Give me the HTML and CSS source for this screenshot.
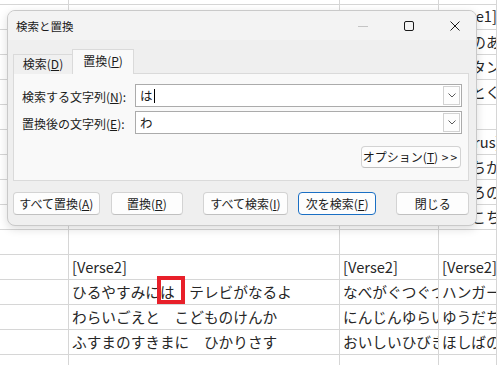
FILE: index.html
```html
<!DOCTYPE html>
<html lang="ja">
<head>
<meta charset="utf-8">
<title>検索と置換</title>
<link rel="stylesheet" href="styles.css">
</head>
<body>
<div class="sheet">
  <div class="c top"></div><div class="c top"></div><div class="c top"></div><div class="c top"></div>
  <div class="c"></div><div class="c r1">[Verse1]</div><div class="c r1">[Verse1]</div><div class="c r1">[Verse1]</div>
  <div class="c"></div><div class="c"></div><div class="c"></div><div class="c">まどのあかり</div>
  <div class="c"></div><div class="c"></div><div class="c"></div><div class="c">ランタンの</div>
  <div class="c"></div><div class="c"></div><div class="c"></div><div class="c">ほっとくつろぐ</div>
  <div class="c"></div><div class="c"></div><div class="c"></div><div class="c"></div>
  <div class="c"></div><div class="c"></div><div class="c"></div><div class="c">[Chorus]</div>
  <div class="c"></div><div class="c"></div><div class="c"></div><div class="c">ちかちか</div>
  <div class="c"></div><div class="c"></div><div class="c"></div><div class="c">こころのうた</div>
  <div class="c"></div><div class="c"></div><div class="c"></div><div class="c">あちこち</div>
  <div class="c"></div><div class="c"></div><div class="c"></div><div class="c"></div>
  <div class="c"></div><div class="c">[Verse2]</div><div class="c">[Verse2]</div><div class="c">[Verse2]</div>
  <div class="c"></div><div class="c">ひるやすみには　テレビがなるよ</div><div class="c">なべがぐつぐつ</div><div class="c">ハンガーに</div>
  <div class="c"></div><div class="c">わらいごえと　こどものけんか</div><div class="c">にんじんゆらいで</div><div class="c">ゆうだちの</div>
  <div class="c"></div><div class="c">ふすまのすきまに　ひかりさす</div><div class="c">おいしいひびき</div><div class="c">ほしばのうた</div>
  <div class="c"></div><div class="c"></div><div class="c"></div><div class="c"></div>
</div>

<div class="highlight"></div>

<div class="dialog">
  <div class="titlebar">
    <span class="title">検索と置換</span>
    <div class="winbtns">
      <span class="wb"><svg width="10" height="10" viewBox="0 0 10 10"><line x1="0" y1="5.5" x2="10" y2="5.5" stroke="#c4c4c4" stroke-width="1"/></svg></span>
      <span class="wb"><svg width="10" height="10" viewBox="0 0 10 10"><rect x="0.5" y="0.5" width="9" height="9" rx="1.5" fill="none" stroke="#1a1a1a" stroke-width="1"/></svg></span>
      <span class="wb"><svg width="10" height="10" viewBox="0 0 10 10"><path d="M0.5 0.5 L9.5 9.5 M9.5 0.5 L0.5 9.5" stroke="#1a1a1a" stroke-width="1" fill="none"/></svg></span>
    </div>
  </div>
  <div class="dbody">
    <div class="tabs">
      <div class="tab">検索(<u>D</u>)</div>
      <div class="tab active">置換(<u>P</u>)</div>
    </div>
    <div class="panel">
      <div class="frow">
        <span class="label">検索する文字列(<u>N</u>):</span>
        <div class="combo"><span class="val">は<span class="caret"></span></span><span class="drop"><svg width="8" height="5" viewBox="0 0 8 5"><polyline points="0.5,0.5 4,4 7.5,0.5" fill="none" stroke="#5a5a5a" stroke-width="1"/></svg></span></div>
      </div>
      <div class="frow">
        <span class="label">置換後の文字列(<u>E</u>):</span>
        <div class="combo"><span class="val">わ</span><span class="drop"><svg width="8" height="5" viewBox="0 0 8 5"><polyline points="0.5,0.5 4,4 7.5,0.5" fill="none" stroke="#5a5a5a" stroke-width="1"/></svg></span></div>
      </div>
      <div class="optrow">
        <button class="btn opt">オプション(<u>T</u>) <span class="gt">&gt;&gt;</span></button>
      </div>
    </div>
    <div class="actions">
      <button class="btn b-all-rep">すべて置換(<u>A</u>)</button>
      <button class="btn b-rep">置換(<u>R</u>)</button>
      <button class="btn b-all-find">すべて検索(<u>I</u>)</button>
      <button class="btn b-next default">次を検索(<u>F</u>)</button>
      <button class="btn b-close">閉じる</button>
    </div>
  </div>
</div>
</body>
</html>
```

FILE: styles.css
```css
* { box-sizing: border-box; }
html, body { margin: 0; padding: 0; }
body {
  width: 497px;
  height: 365px;
  overflow: hidden;
  background: #ffffff;
  position: relative;
  font-family: "Noto Sans CJK JP", "Noto Sans", sans-serif;
}

/* spreadsheet */
.sheet {
  display: grid;
  grid-template-columns: 69px 271px 99px 1fr;
  grid-template-rows: 5px;
  grid-auto-rows: 25px;
  font-size: 14.67px;
  color: #262626;
}
.c {
  border-right: 1px solid #d6d6d6;
  border-bottom: 1px solid #d6d6d6;
  padding-left: 3px;
  line-height: 24px;
  white-space: nowrap;
  overflow: hidden;
}
.c.r1 { line-height: 21px; }

.highlight {
  position: absolute;
  left: 157px;
  top: 276px;
  width: 28px;
  height: 28px;
  border: 4px solid #e8202a;
}

/* dialog */
.dialog {
  position: absolute;
  left: 7px;
  top: 10px;
  width: 470px;
  height: 216px;
  border: 1px solid #c9c9c9;
  border-radius: 8px;
  background: #efefef;
  box-shadow: 0 3px 10px rgba(0,0,0,0.14);
  overflow: hidden;
  display: flex;
  flex-direction: column;
  font-size: 12px;
  color: #1b1b1b;
}
.titlebar {
  height: 29px;
  flex: none;
  background: #f3f3f3;
  display: flex;
  align-items: center;
  padding-left: 8px;
}
.title { font-size: 11.5px; flex: 1; }
.winbtns { display: flex; height: 100%; }
.wb {
  width: 46px;
  height: 100%;
  padding-left: 4px;
  display: flex;
  align-items: center;
  justify-content: center;
}
.wb svg { display: block; }

.dbody {
  flex: 1;
  padding: 9px 7px 0 5px;
  display: flex;
  flex-direction: column;
}
.tabs {
  display: flex;
  align-items: flex-end;
  height: 25px;
  position: relative;
  z-index: 1;
  margin-bottom: -1px;
}
.tab {
  height: 20px;
  width: 59px;
  text-align: center;
  line-height: 18px;
  border: 1px solid #dadada;
  border-bottom: none;
  border-right: none;
  background: #f0f0f0;
}
.tab.active {
  height: 25px;
  width: 62px;
  line-height: 22px;
  border-right: 1px solid #dadada;
  background: #f9f9f9;
}
u { text-decoration: underline; text-underline-offset: 1px; }

.panel {
  height: 108px;
  border: 1px solid #dadada;
  background: #f9f9f9;
  padding: 10px 6px 0 8px;
  display: flex;
  flex-direction: column;
  gap: 4px;
}
.frow {
  display: flex;
  align-items: center;
  height: 23px;
}
.label { width: 113px; flex: none; padding-top: 2px; }
.combo {
  flex: 1;
  height: 23px;
  border: 1px solid #ababab;
  background: #ffffff;
  display: flex;
  align-items: center;
  padding: 1px;
}
.val {
  flex: 1;
  padding-left: 3px;
  font-size: 12.5px;
  display: flex;
  align-items: center;
}
.caret {
  display: inline-block;
  width: 1px;
  height: 14px;
  background: #000;
  margin-left: 1px;
}
.drop {
  width: 17px;
  height: 100%;
  border: 1px solid #d2d2d2;
  background: #fdfdfd;
  display: flex;
  align-items: center;
  justify-content: center;
}
.drop svg { display: block; }

.optrow {
  display: flex;
  justify-content: flex-end;
  margin-top: 8px;
  padding-right: 1px;
}

.btn {
  font-family: inherit;
  font-size: 12px;
  color: #1b1b1b;
  height: 23px;
  padding: 0;
  border: 1px solid #d3d3d3;
  border-bottom-color: #c0c0c0;
  border-radius: 4px;
  background: #fdfdfd;
  line-height: 20px;
  text-align: center;
}
.opt { width: 100px; height: 22px; }
.gt { letter-spacing: 2px; margin-left: 1px; }

.actions {
  display: flex;
  margin-top: 11px;
}
.b-all-rep { width: 87px; }
.b-rep { width: 73px; margin-left: 11px; }
.b-all-find { width: 85px; margin-left: 20px; }
.b-next { width: 79px; margin-left: 10px; }
.b-close { width: 73px; margin-left: 20px; }
.btn.default { border: 1px solid #1a6fc4; }
```
